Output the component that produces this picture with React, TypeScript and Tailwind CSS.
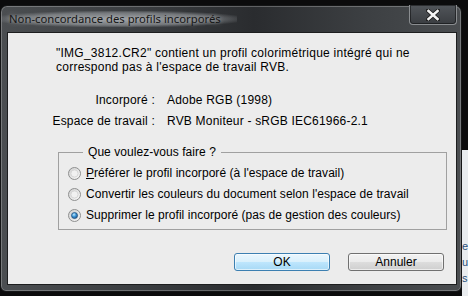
import React from 'react';

const font = "font-['Liberation_Sans',Arial,sans-serif]";

const Radio = ({ checked = false, id }: { checked?: boolean; id: string }) => (
  <svg width="13" height="13" viewBox="0 0 13 13" className="shrink-0">
    <defs>
      <linearGradient id={`ring-${id}`} x1="0" y1="0" x2="1" y2="1">
        <stop offset="0" stopColor="#cfcfcf" />
        <stop offset="1" stopColor="#fbfbfb" />
      </linearGradient>
      <radialGradient id={`dot-${id}`} cx="0.4" cy="0.35" r="0.75">
        <stop offset="0" stopColor="#c4ecff" />
        <stop offset="0.45" stopColor="#3d95d6" />
        <stop offset="1" stopColor="#174d86" />
      </radialGradient>
    </defs>
    <circle cx="6.5" cy="6.5" r="6" fill={`url(#ring-${id})`} stroke="#8e8f8f" />
    <circle cx="6.5" cy="6.5" r="3.6" fill="#f1f1f1" stroke="#d0d0d0" strokeWidth="0.8" />
    {checked && <circle cx="6.5" cy="6.5" r="3" fill={`url(#dot-${id})`} stroke="#1c4a78" strokeWidth="0.7" />}
  </svg>
);

const options = [
  { key: 'a', label: <><span className="underline">P</span>référer le profil incorporé (à l'espace de travail)</> },
  { key: 'b', label: <>Convertir les couleurs du document selon l'espace de travail</> },
  { key: 'c', label: <>Supprimer le profil incorporé (pas de gestion des couleurs)</>, checked: true },
];

export default function App() {
  return (
    <div className={`w-[468px] h-[296px] bg-[#0b0b0c] overflow-hidden flex ${font}`}>
      {/* window */}
      <div className="mt-[5px] w-[462px] h-[287px] shrink-0 rounded-t-[7px] rounded-b-[6px] border border-[#141516] bg-[linear-gradient(90deg,#4b4e51_0%,#3a3d40_30%,#2a2c2f_55%,#3d4043_80%,#4a4d50_100%)] shadow-[inset_0_0_0_1px_rgba(255,255,255,0.25)] flex flex-col pl-[6px] pr-[4px] pb-[6px]">
        {/* title bar */}
        <div className="h-[26px] flex items-start justify-between shrink-0">
          <span className="mt-[5px] -ml-[6px] pl-[8px] pr-[16px] text-[11.3px] leading-[16px] text-[#161616] bg-[radial-gradient(ellipse_at_center,rgba(170,174,178,0.85)_0%,rgba(150,154,158,0.6)_55%,rgba(150,154,158,0)_78%)] [text-shadow:0_0_5px_rgba(255,255,255,0.45)] font-['Noto_Sans',sans-serif]">
            Non-concordance des profils incorporés
          </span>
          <div className="w-[48px] h-[20px] -mt-[1px] rounded-b-[4px] border border-t-0 border-[#8a8d90] bg-[linear-gradient(#51555a,#3a3d41)] shadow-[inset_0_0_0_1px_rgba(0,0,0,0.45)] flex items-center justify-center">
            <svg width="14" height="12" viewBox="0 0 14 12">
              <path d="M2 1.5 L12 10.5 M12 1.5 L2 10.5" stroke="#1a1a1a" strokeWidth="4" strokeLinecap="square" />
              <path d="M2.5 2 L11.5 10 M11.5 2 L2.5 10" stroke="#f4f4f4" strokeWidth="2.6" strokeLinecap="square" />
            </svg>
          </div>
        </div>
        {/* client */}
        <div className="flex-1 border border-[#1d1e1f] bg-[#ececec] text-[12px] leading-[14px] text-black flex flex-col">
          <div className="ml-[48px] mt-[13px] tracking-[0.25px]">
            <div>"IMG_3812.CR2" contient un profil colorimétrique intégré qui ne</div>
            <div>correspond pas à l'espace de travail RVB.</div>
          </div>
          <div className="mt-[19px] flex gap-[12px] tracking-[0.2px]">
            <div className="w-[147px] text-right">Incorporé :</div>
            <div>Adobe RGB (1998)</div>
          </div>
          <div className="mt-[7px] flex gap-[12px] tracking-[0.2px]">
            <div className="w-[147px] text-right">Espace de travail :</div>
            <div>RVB Moniteur - sRGB IEC61966-2.1</div>
          </div>
          <fieldset className="ml-[50px] mt-[17px] w-[389px] border border-[#a0a0a0] pl-[9px] pb-[7px] tracking-[0.05px]">
            <legend className="ml-[15px] px-[5px]">Que voulez-vous faire ?</legend>
            <div className="mt-[7px] flex flex-col gap-[7px]">
              {options.map((o) => (
                <label key={o.key} className="flex items-center gap-[5px]">
                  <Radio id={o.key} checked={o.checked} />
                  <span>{o.label}</span>
                </label>
              ))}
            </div>
          </fieldset>
          <div className="mt-[23px] mr-[12px] flex justify-end gap-[18px]">
            <button className="w-[96px] h-[18px] rounded-[3px] border border-[#3c7fb1] bg-[linear-gradient(#eaf6fd,#d9f0fc_50%,#bee6fd_50%,#a7d9f5)] shadow-[inset_0_0_0_1px_rgba(255,255,255,0.6)] text-[12px] leading-[16px]">
              OK
            </button>
            <button className="w-[96px] h-[18px] rounded-[3px] border border-[#707070] bg-[linear-gradient(#f2f2f2,#ebebeb_50%,#dddddd_50%,#cfcfcf)] shadow-[inset_0_0_0_1px_rgba(255,255,255,0.6)] text-[12px] leading-[16px]">
              Annuler
            </button>
          </div>
        </div>
      </div>
      {/* background to the right of the window */}
      <div className="flex-1 flex flex-col">
        <div className="h-[150px] bg-[#0b0b0c]" />
        <div className="flex-1 bg-[#e9ecef] overflow-hidden text-[11px] leading-[16px] text-[#2a4f7a] pt-[88px] whitespace-nowrap">
          <div>ef</div>
          <div>u</div>
          <div>s</div>
        </div>
      </div>
    </div>
  );
}
